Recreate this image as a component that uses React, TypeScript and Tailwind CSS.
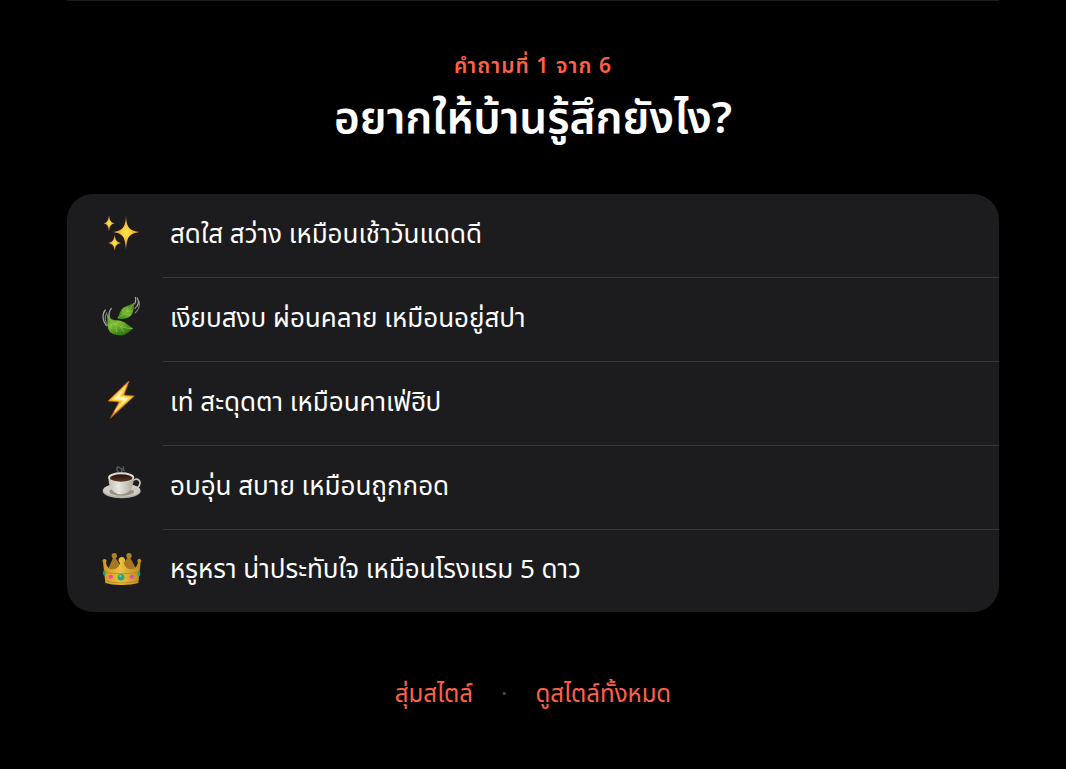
import React, { useState } from 'react';

interface Option {
    id: string;
    label: string;
    icon: React.ReactNode;
}

const Sparkles = () => (
    <svg viewBox="30 25 132 132" className="mb-0.5 size-11" aria-hidden="true">
        <defs>
            <radialGradient id="star">
                <stop offset="0" stopColor="#ffe94a" />
                <stop offset="0.3" stopColor="#fbcf3b" />
                <stop offset="0.7" stopColor="#e59a36" />
                <stop offset="1" stopColor="#8a4a20" />
            </radialGradient>
        </defs>
        <g fill="url(#star)">
            <path d="M108 32C110 66 115 79 152 82C115 86 111 98 108 136C105 98 101 86 66 82C101 79 106 66 108 32Z" />
            <path d="M57 30C59 47 61 53 75 56C61 59 59 65 57 81C55 65 53 59 40 56C53 53 55 47 57 30Z" />
            <path d="M74 89C76 106 78 112 94 115C78 118 76 124 74 140C72 124 70 118 54 115C70 112 72 106 74 89Z" />
        </g>
    </svg>
);

const Leaves = () => (
    <svg viewBox="30 28 132 132" className="mb-0.5 size-11" aria-hidden="true">
        <defs>
            <linearGradient id="leafTop" x1="1" y1="0" x2="0" y2="1">
                <stop offset="0" stopColor="#326e15" />
                <stop offset="0.5" stopColor="#76b52f" />
                <stop offset="1" stopColor="#347d14" />
            </linearGradient>
            <linearGradient id="leafBottom" x1="0" y1="0" x2="0.5" y2="1">
                <stop offset="0" stopColor="#467f23" />
                <stop offset="0.5" stopColor="#7fbd35" />
                <stop offset="1" stopColor="#2f7711" />
            </linearGradient>
        </defs>
        <g fill="none" stroke="#a9aca9" strokeWidth="3.5" strokeLinecap="round">
            <path d="M46 67C35 80 38 101 49 114" />
            <path d="M50 75C42 89 46 105 54 114" stroke="#777b77" />
            <path d="M64 62C55 72 56 82 59 92" />
            <path d="M136 28C139 37 137 42 134 49" />
            <path d="M142 31C148 43 145 54 135 62" />
            <path d="M148 42C150 57 145 68 135 76" stroke="#777b77" />
        </g>
        <path d="M82 92C91 76 91 61 111 55C120 51 128 50 133 43C132 53 133 61 129 72C124 91 101 97 82 92Z" fill="url(#leafTop)" />
        <path d="M84 91C103 80 119 67 132 46M99 81L100 66M111 73L113 59M102 79L119 82M113 71L128 70" fill="none" stroke="#a9d052" strokeWidth="1.5" />
        <path d="M51 77C60 91 63 98 81 98C101 98 114 114 131 123C119 126 112 145 87 143C61 141 53 130 53 110C53 98 50 89 51 77Z" fill="url(#leafBottom)" />
        <path d="M52 81C61 107 83 119 127 123M65 107L62 123M77 114L80 134M92 119L103 134M72 111L83 103M91 118L102 112" fill="none" stroke="#a9d052" strokeWidth="1.8" />
    </svg>
);

const Lightning = () => (
    <svg viewBox="30 28 132 132" className="mb-0.5 size-11" aria-hidden="true">
        <defs>
            <linearGradient id="bolt" x1="0" y1="0" x2="0" y2="1">
                <stop offset="0" stopColor="#f6a127" />
                <stop offset="0.5" stopColor="#ffb62b" />
                <stop offset="1" stopColor="#e8841d" />
            </linearGradient>
        </defs>
        <path d="M118 26L54 88L87 91L61 140L133 73L102 70Z" fill="url(#bolt)" stroke="#b76417" strokeWidth="2" strokeLinejoin="round" />
        <path d="M107 43L68 83L98 87L75 119L119 78L91 74Z" fill="#fff6b8" stroke="#ffd957" strokeWidth="4" strokeLinejoin="round" />
    </svg>
);

const Coffee = () => (
    <svg viewBox="30 31 132 132" className="mb-0.5 size-11" aria-hidden="true">
        <defs>
            <linearGradient id="cup">
                <stop offset="0" stopColor="#c1beb6" />
                <stop offset="0.4" stopColor="#e9e6df" />
                <stop offset="1" stopColor="#aaa69d" />
            </linearGradient>
            <linearGradient id="brew" x1="0" y1="0" x2="0" y2="1">
                <stop offset="0" stopColor="#25110b" />
                <stop offset="1" stopColor="#5b3424" />
            </linearGradient>
        </defs>
        <path d="M86 52C75 42 82 33 89 39C96 46 105 43 99 36M96 52C90 45 99 44 103 48" fill="none" stroke="#55585d" strokeWidth="4" strokeLinecap="round" />
        <ellipse cx="95" cy="109" rx="57" ry="22" fill="#b5b2a9" />
        <ellipse cx="95" cy="106" rx="55" ry="19" fill="#d0cdc4" />
        <ellipse cx="95" cy="111" rx="37" ry="12" fill="#96928a" />
        <path d="M128 78C144 67 155 79 147 94C142 103 133 105 122 104" fill="none" stroke="#c9c6bd" strokeWidth="5" />
        <path d="M55 67C56 96 65 118 93 119C122 118 131 94 132 67Z" fill="url(#cup)" />
        <ellipse cx="93.5" cy="68" rx="39" ry="15" fill="#dedbd3" />
        <ellipse cx="93.5" cy="70" rx="34" ry="11" fill="url(#brew)" />
    </svg>
);

const Crown = () => (
    <svg viewBox="30 27 132 132" className="mb-0.5 size-11" aria-hidden="true">
        <defs>
            <linearGradient id="gold">
                <stop offset="0" stopColor="#cf9520" />
                <stop offset="0.45" stopColor="#ecc03c" />
                <stop offset="1" stopColor="#bd861f" />
            </linearGradient>
        </defs>
        <path d="M54 90L69 57H77L93 83L112 57H121L139 90V116H54Z" fill="#a57720" />
        <circle cx="73" cy="50" r="8" fill="#b08125" />
        <circle cx="117" cy="50" r="8" fill="#b08125" />
        <path d="M46 132L39 70A6 6 0 1 1 48 70C50 84 57 91 66 91C79 91 87 84 90 72A10 10 0 1 1 101 72C105 84 113 91 125 91C136 90 141 83 144 70A6 6 0 1 1 152 70L145 132C123 140 68 140 46 132Z" fill="url(#gold)" />
        <path d="M43 98C62 106 129 106 148 98M46 125C68 134 123 134 145 125" fill="none" stroke="#b27b1a" strokeWidth="2" />
        <circle cx="93" cy="115" r="10" fill="#20a77b" />
        <circle cx="91" cy="111" r="3" fill="#70d7ac" />
        <ellipse cx="62" cy="113" rx="7" ry="6" fill="#df4fb0" />
        <ellipse cx="126" cy="113" rx="7" ry="6" fill="#df4fb0" />
        <ellipse cx="43" cy="102" rx="4" ry="8" fill="#18a27a" />
        <ellipse cx="147" cy="104" rx="4" ry="9" fill="#18a27a" />
    </svg>
);

const options: Option[] = [
    { id: 'bright', label: 'สดใส สว่าง เหมือนเช้าวันแดดดี', icon: <Sparkles /> },
    { id: 'calm', label: 'เงียบสงบ ผ่อนคลาย เหมือนอยู่สปา', icon: <Leaves /> },
    { id: 'cool', label: 'เท่ สะดุดตา เหมือนคาเฟ่ฮิป', icon: <Lightning /> },
    { id: 'warm', label: 'อบอุ่น สบาย เหมือนถูกกอด', icon: <Coffee /> },
    { id: 'luxury', label: 'หรูหรา น่าประทับใจ เหมือนโรงแรม 5 ดาว', icon: <Crown /> },
];

const App: React.FC = () => {
    const [selected, setSelected] = useState('');

    return (
        <main className="min-h-screen bg-black px-[67px] font-['Noto_Sans','Noto_Sans_Thai',sans-serif] text-white">
            <div className="border-t border-[#1c1c1e] pt-12">
                <header className="text-center">
                    <p className="text-[21px] leading-8 font-semibold tracking-wider text-[#ff6048]">คำถามที่ 1 จาก 6</p>
                    <h1 className="mt-1 text-[44px] leading-[62px] font-semibold">อยากให้บ้านรู้สึกยังไง?</h1>
                </header>

                <div className="mt-[47px] overflow-hidden rounded-[26px] bg-[#1c1c1e]">
                    {options.map(option => (
                        <button
                            key={option.id}
                            type="button"
                            aria-pressed={selected === option.id}
                            onClick={() => setSelected(option.id)}
                            className="group flex w-full cursor-pointer items-center pl-[33px] text-left"
                        >
                            {option.icon}
                            <span className="ml-[19px] flex h-[84px] flex-1 items-center border-b border-[#38383a] pb-1.5 pl-[7px] text-[26px] leading-10 group-last:h-[82px] group-last:border-b-0">
                                {option.label}
                            </span>
                        </button>
                    ))}
                </div>

                <footer className="flex items-center justify-center gap-7 pt-[63px] pb-14 text-[24px] leading-9 text-[#ff6048]">
                    <button type="button" className="cursor-pointer">สุ่มสไตล์</button>
                    <span className="text-[#48484a]">·</span>
                    <button type="button" className="cursor-pointer">ดูสไตล์ทั้งหมด</button>
                </footer>
            </div>
        </main>
    );
};

export default App;
